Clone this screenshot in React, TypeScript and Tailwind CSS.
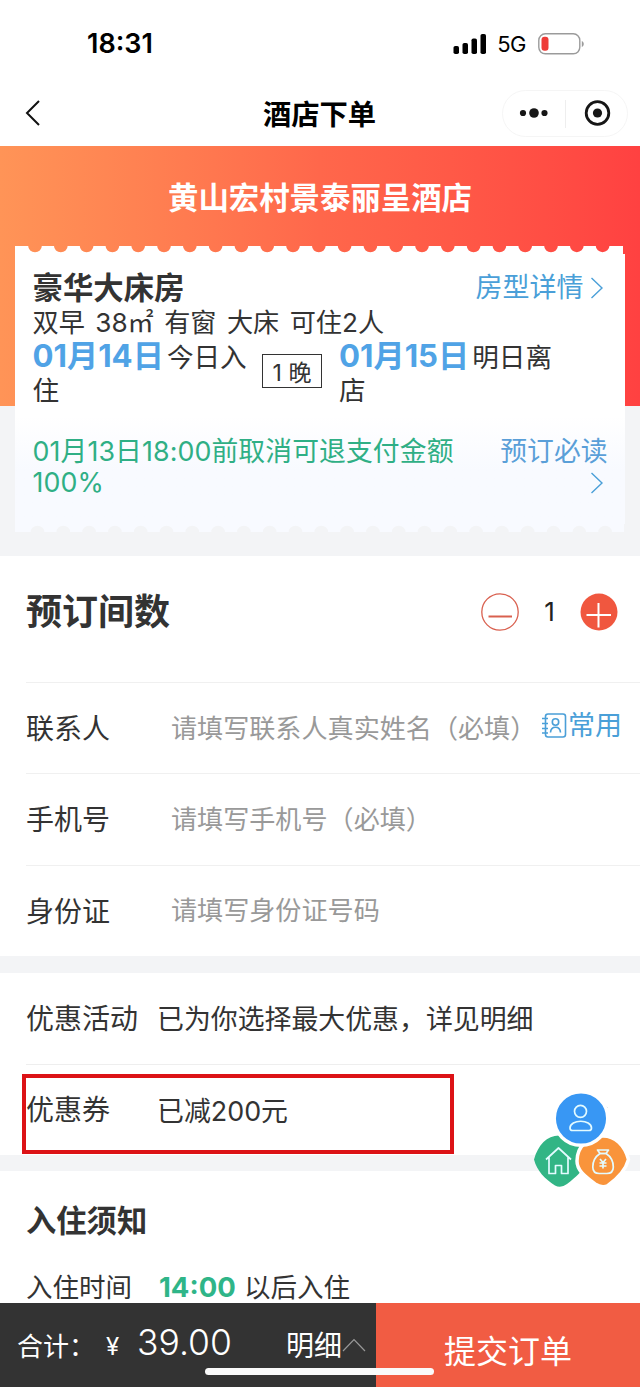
import type { ReactNode } from "react";

// Outline of one perforated edge of the ticket card
function perforation(first: number, right: number) {
  let d = "M0 8V0";
  for (let i = 0; i < 23; i++) {
    const x = first + i * 25.8;
    d += `H${x - 6.8}a6.8 6.2 0 0 0 13.6 0`;
  }
  return d + `H${right}V8Z`;
}

function Chevron({ className = "" }: { className?: string }) {
  return (
    <svg className={className} width="12" height="24" viewBox="0 0 12 24" fill="none" stroke="#4a9fd8" strokeWidth="1.4">
      <path d="M0.500 2l10.500 10L0.500 22" />
    </svg>
  );
}

function StatusBar() {
  return (
    <div className="flex h-20 items-center justify-between pt-2 pr-[55px] pl-[87px]">
      <span className="text-[27px] leading-8 font-semibold text-black">18:31</span>
      <div className="flex items-center">
        <svg width="34" height="22" viewBox="0 0 34 22" fill="#000">
          <rect x="0.5" y="13" width="5.5" height="8" rx="1.8" />
          <rect x="9.5" y="10" width="5.5" height="11" rx="1.8" />
          <rect x="18.5" y="5.5" width="5.5" height="15.5" rx="1.8" />
          <rect x="27.5" y="1" width="5.5" height="20" rx="1.8" />
        </svg>
        <span className="ml-2.5 text-[22px] leading-8 tracking-[-0.5px] text-black">5G</span>
        <svg className="ml-3" width="47" height="22" viewBox="0 0 47 22">
          <rect x="0.8" y="0.8" width="41" height="20" rx="6.5" fill="none" stroke="#9b9b9b" strokeWidth="1.4" />
          <rect x="3.5" y="3.8" width="7" height="14" rx="3" fill="#ee3b38" />
          <path d="M43.8 8v6c2.6-1 2.6-5 0-6Z" fill="#9b9b9b" />
        </svg>
      </div>
    </div>
  );
}

function NavBar() {
  return (
    <div className="flex h-[66px] items-center justify-between pr-[12px] pl-[25px]">
      <svg width="112" height="26" viewBox="0 0 112 26" fill="none" stroke="#111" strokeWidth="2">
        <path d="M14 1L2 13l12 12" />
      </svg>
      <h1 className="pt-1 text-[28.3px] leading-10 font-semibold text-black">酒店下单</h1>
      <svg width="126" height="47" viewBox="0 0 126 47" fill="#161616">
        <rect x="0.5" y="0.5" width="125" height="46" rx="23" fill="#fff" stroke="#f5f5f5" />
        <path d="M63.5 10v28" stroke="#eee" />
        <circle cx="21" cy="23" r="3.1" />
        <circle cx="32" cy="23" r="4.8" />
        <circle cx="42.5" cy="23" r="3.1" />
        <circle cx="95.5" cy="23" r="11.3" fill="none" stroke="#161616" strokeWidth="2.8" />
        <circle cx="95.5" cy="23" r="4.6" />
      </svg>
    </div>
  );
}

function Stay({ date, rest, className }: { date: string; rest: string; className: string }) {
  return (
    <p className={className}>
      <b className="mr-[3px] text-[31.2px] leading-[30px] font-bold text-[#50a3e6]">{date}</b>
      {rest}
    </p>
  );
}

function TicketCard() {
  return (
    <div className="mx-[15px] h-[286px]">
      <svg className="block" width="610" height="8" viewBox="0 0 610 8" fill="#fff">
        <path d={perforation(20, 608)} />
      </svg>
      <div className="h-[270px] bg-linear-to-b from-white from-60% to-[#f8faff] to-80% px-[17.5px]">
        <div className="flex justify-between pt-[14px]">
          <h3 className="text-[30.4px] leading-10 font-bold text-[#333]">豪华大床房</h3>
          <div className="flex items-center pr-[5px] text-[27px] leading-10 text-[#4a9fd8]">
            房型详情
            <Chevron className="ml-[7px]" />
          </div>
        </div>
        <p className="text-[26.2px] leading-[30px] text-[#333] [word-spacing:3px]">双早 38㎡ 有窗 大床 可住2人</p>
        <div className="flex pt-[3px] text-[26.6px] leading-[33px] text-[#333]">
          <Stay className="w-[229.5px]" date="01月14日" rest="今日入住" />
          <div className="mt-[13px] h-[34px] w-[60px] border-[1.5px] border-[#333] text-center text-[23px] leading-[37px]">1 晚</div>
          <Stay className="ml-[17px] w-[229px]" date="01月15日" rest="明日离店" />
        </div>
        <div className="mt-[29px] flex justify-between text-[26.8px] leading-[31px]">
          <p className="w-[440px] tracking-[0.1px] text-[#2faf85]">01月13日18:00前取消可退支付金额100%</p>
          <div className="flex flex-col items-end text-[#5a9fd8]">
            预订必读
            <Chevron className="mt-1 mr-[5px]" />
          </div>
        </div>
      </div>
      <svg className="block" width="610" height="8" viewBox="0 0 610 8" fill="#f8faff">
        <path transform="matrix(1 0 0 -1 0 8)" d={perforation(22.5, 609)} />
      </svg>
    </div>
  );
}

function RoomCount() {
  return (
    <div className="flex h-[126px] items-start justify-between pt-9 pr-[22px]">
      <h2 className="text-[36px] leading-10 font-bold text-[#333]">预订间数</h2>
      <div className="flex items-center">
        <svg width="38" height="38" viewBox="0 0 38 38" fill="none" stroke="#d9604f">
          <circle cx="19" cy="19" r="18.2" strokeWidth="1.3" />
          <path d="M7.5 23.500h23.5" strokeWidth="2" />
        </svg>
        <span className="w-[61px] text-center text-[26px] leading-10 text-[#222]">1</span>
        <svg width="38" height="38" viewBox="0 0 38 38" fill="none" stroke="#fff" strokeWidth="2">
          <circle cx="19" cy="19" r="18.5" fill="#f0573f" stroke="none" />
          <path d="M6.500 22h24.500M18.500 10v24.500" />
        </svg>
      </div>
    </div>
  );
}

function FormRow({ label, placeholder, children }: { label: string; placeholder: string; children?: ReactNode }) {
  return (
    <div className="flex h-[91.3px] items-center border-t-[1.5px] border-[#f0f0f0] text-[28px] text-[#333]">
      <span className="w-[145px] pt-0.5">{label}</span>
      <span className="text-[26.1px] whitespace-nowrap text-[#999]">{placeholder}</span>
      {children}
    </div>
  );
}

function PromoRow({ label, value, className = "" }: { label: string; value: string; className?: string }) {
  return (
    <div className={`flex h-[91px] items-center text-[28px] text-[#333] ${className}`}>
      <span className="w-[131px]">{label}</span>
      <span className="pt-0.5 text-[26.9px]">{value}</span>
    </div>
  );
}

function QuickMenu() {
  return (
    <svg className="absolute top-[1090px] left-[530px]" width="102" height="100" viewBox="0 0 102 100" fill="none" strokeLinejoin="round">
      <path d="M65 7l12 10.500-6 8" stroke="#777" strokeWidth="1" />
      <path d="M4 69.500C8 55 17 45.500 29 45.500C43 45.500 54 56 54 71C54 81 46 87 37 94Q31 98.500 25 95.500C15 89 7 81 4 69.500Z" fill="#32b585" />
      <path d="M98.500 69.500C94.500 55 85 46 73 46C59 46 47 56 47 71C47 81 56 87 65 94Q72 98.500 78 95.500C87 89 95.500 81 98.500 69.500Z" fill="#f9943b" stroke="#fff" strokeWidth="3.500" />
      <circle cx="51" cy="28.500" r="26.800" fill="#3897f4" stroke="#fff" strokeWidth="3.500" />
      <g stroke="#e3fbff" strokeWidth="1.700">
        <circle cx="50.500" cy="21.300" r="6" />
        <path d="M40 38c0-9 21.500-9 21.500 0q0 2.500-2.500 2.500h-16.500q-2.500 0-2.500-2.500Z" />
        <path d="M16 69.500l12.500-11.500 12.500 11.500M19 67.500v16h6.500v-8h6v8h6.500V67.500" />
        <path d="M67.500 60h11l-2.500 3.500h-6l-2.500-3.500Z" />
        <path d="M70 63.500c-4.500 3-7.200 8-7.200 13.500q0 6.500 6.500 6.500h7.500q6.500 0 6.500-6.500c0-5.500-2.700-10.500-7.200-13.500Z" />
        <path d="M70 69l3 3.500 3-3.500M73 72.500v6M69.500 73h7M69.500 76h7" />
      </g>
    </svg>
  );
}

function BottomBar() {
  return (
    <div className="relative flex h-21 text-white">
      <div className="flex w-[376px] items-center bg-[#333] pl-[17px] text-[26px] whitespace-nowrap">
        <span className="w-[89px] pt-0.5">合计：</span>
        <span className="w-[31px] pt-1 text-[24px]">¥</span>
        <span className="w-[149px] pb-1 text-[35.5px] font-light">39.00</span>
        <span className="pt-0.5 text-[28px]">明细</span>
        <svg width="24" height="14" viewBox="0 0 24 14" fill="none" stroke="#999" strokeWidth="1.2">
          <path d="M1 13L12 1.500l11 11.500" />
        </svg>
      </div>
      <button className="flex-1 bg-[#f15c43] pt-[14px] text-[32px]">提交订单</button>
      <div className="absolute bottom-3 left-[205px] h-[7px] w-[229px] rounded-full bg-[#fafafa]" />
    </div>
  );
}

export default function App() {
  return (
    <div className="relative flex h-[1387px] w-[640px] flex-col overflow-hidden bg-white font-[Inter,'Noto_Sans_CJK_SC',sans-serif]">
      <StatusBar />
      <NavBar />

      <div className="h-[410px] bg-[#f3f4f6]">
        <div className="h-[260px] bg-linear-to-r from-[#ff9457] via-[#ff674b] to-[#ff4141]">
          <h2 className="h-[100px] pt-8 text-center text-[30.4px] leading-10 font-semibold text-white">黄山宏村景泰丽呈酒店</h2>
          <TicketCard />
        </div>
      </div>

      <div className="h-[400px] pl-[26px]">
        <RoomCount />
        <FormRow label="联系人" placeholder="请填写联系人真实姓名（必填）">
          <div className="mb-1 ml-auto flex items-center pr-[18px] text-[27px] text-[#4a9fd8]">
            <svg width="27" height="27" viewBox="0 0 27 27" fill="none" stroke="#4a9fd8" strokeWidth="1.6">
              <rect x="4.500" y="1" width="20" height="23" rx="2.500" />
              <path d="M1 5.500h6M1 10.500h6M1 15.500h6M1 20h6" />
              <circle cx="14.500" cy="9" r="3.200" />
              <path d="M9.500 19.500c.5-7 9.500-7 10 0" />
            </svg>
            常用
          </div>
        </FormRow>
        <FormRow label="手机号" placeholder="请填写手机号（必填）" />
        <FormRow label="身份证" placeholder="请填写身份证号码" />
      </div>

      <div className="h-[17px] bg-[#f3f4f6]" />
      <div className="h-[182px] pl-[26px]">
        <PromoRow label="优惠活动" value="已为你选择最大优惠，详见明细" />
        <PromoRow label="优惠券" value="已减200元" className="border-t border-[#eee]" />
      </div>
      <div className="h-4 bg-[#f3f4f6]" />

      <div className="h-[132px] pt-[30px] pl-[26px] text-[#333]">
        <h2 className="text-[30.3px] leading-10 font-bold">入住须知</h2>
        <div className="flex pt-[26px] text-[26.5px] leading-10">
          <span className="w-[133px]">入住时间</span>
          <span className="w-[85px] text-[27.5px] font-bold text-[#2fb588]">14:00</span>
          <span>以后入住</span>
        </div>
      </div>
      <BottomBar />

      {/* Coupon highlight */}
      <div className="absolute top-[1074px] left-[22px] h-[80px] w-[432px] border-[4.5px] border-[#dc1216]" />
      <QuickMenu />
    </div>
  );
}
